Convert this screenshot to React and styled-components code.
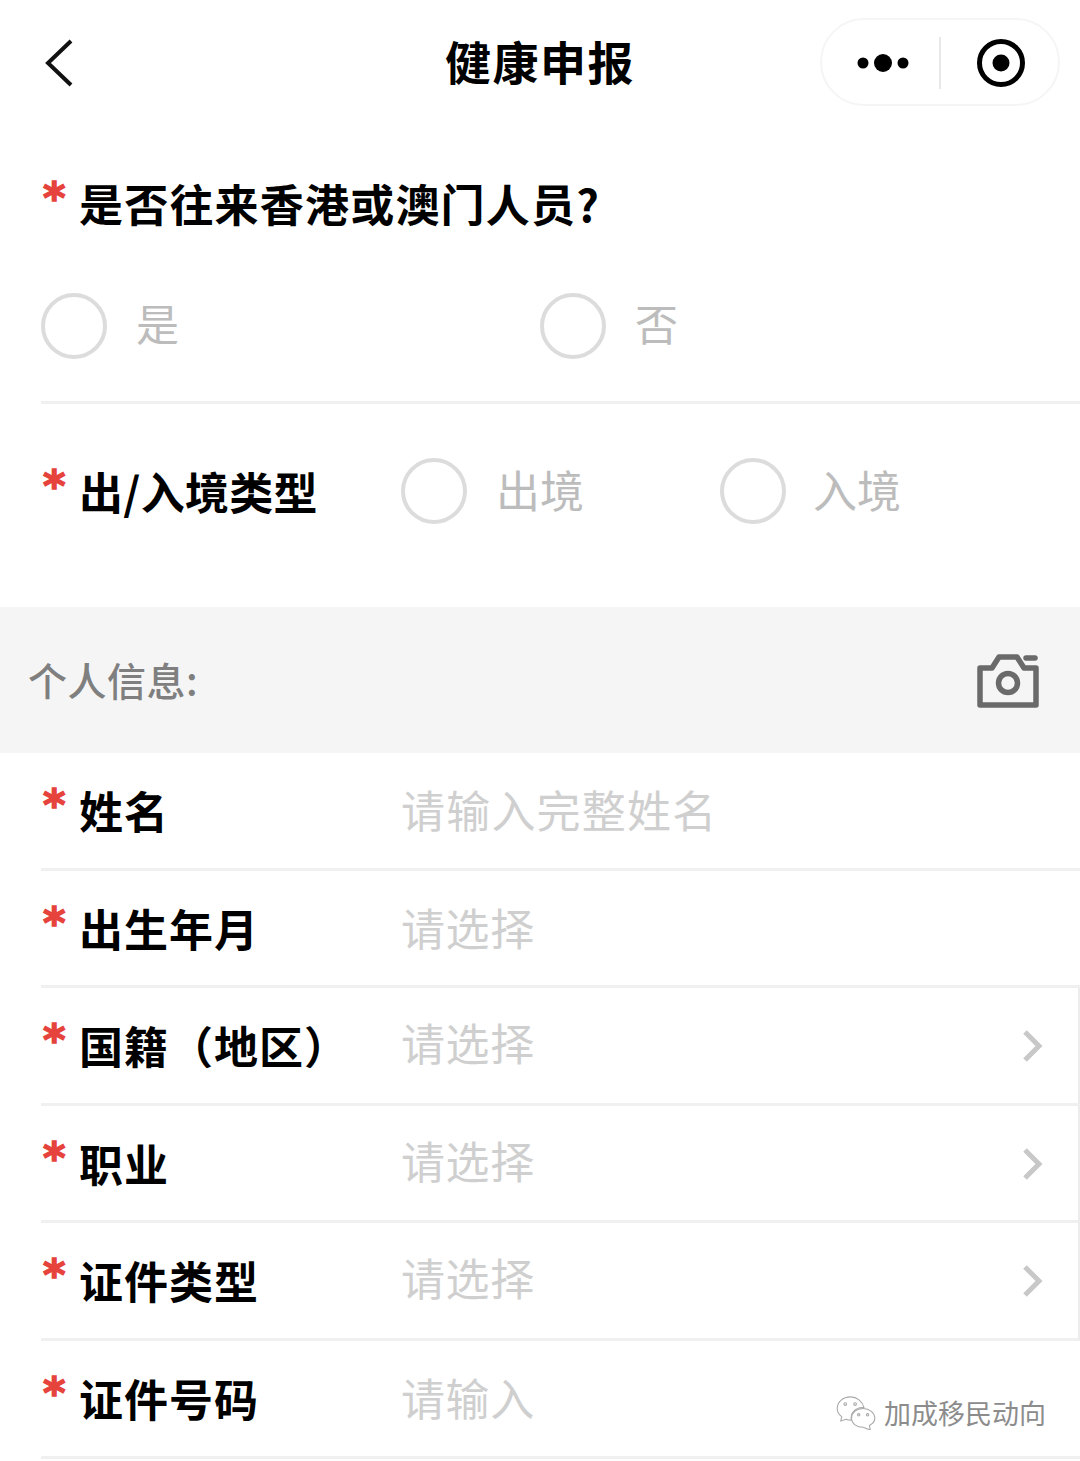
import React from "react";
import styled, { createGlobalStyle } from "styled-components";

const CJK = `"Noto Sans CJK SC", "Noto Sans", sans-serif`;

const Global = createGlobalStyle`
  html, body { margin: 0; padding: 0; background: #fff; }
  * { box-sizing: border-box; }
`;

const Page = styled.div`
  position: relative;
  width: 1080px;
  height: 1461px;
  overflow: hidden;
  background: #fff;
  font-family: ${CJK};
`;

const NavBar = styled.header`
  height: 128px;
  padding: 18px 20px 0 44px;
  display: grid;
  grid-template-columns: 240px 1fr 240px;
  align-items: start;
`;

const BackIcon = styled.svg`
  width: 32px;
  height: 50px;
  margin-top: 21px;
`;

const Title = styled.h1`
  margin: -2px 0 0;
  height: 88px;
  font-size: 46px;
  line-height: 88px;
  letter-spacing: 1.5px;
  font-weight: 700;
  color: #000;
  text-align: center;
  transform: translateX(-12px);
`;

const Capsule = styled.div`
  width: 240px;
  height: 88px;
  border: 2px solid #f5f5f5;
  border-radius: 44px;
  display: grid;
  grid-template-columns: 117px 2px 1fr;
  align-items: center;
  justify-items: center;
  padding-top: 2px;
`;

const MoreIcon = styled.svg`
  margin-left: 4px;
`;

const RecordIcon = styled.svg`
  margin-left: 2px;
`;

const CapsuleRule = styled.span`
  width: 2px;
  height: 52px;
  background: #e8e8e8;
`;

const Question = styled.section`
  margin-left: 41px;
  height: 276px;
  padding-top: 45px;
  border-bottom: 3px solid #f0f0f0;
`;

const LabelLine = styled.div`
  display: flex;
  align-items: flex-start;
  height: 119px;
`;

const Star = styled.span`
  width: 38px;
  flex: none;
  font-family: "DejaVu Sans", sans-serif;
  font-weight: 700;
  font-size: 43px;
  line-height: 44px;
  color: #e5433c;
  -webkit-text-stroke: 1.5px #e5433c;
  padding-left: 2px;
  margin-top: 3px;
`;

const Label = styled.span`
  font-size: 44px;
  line-height: 60px;
  font-weight: 700;
  color: #000;
  white-space: nowrap;
  letter-spacing: ${(p) => p.$spacing}px;
`;

const Options = styled.div`
  display: grid;
  grid-template-columns: ${(p) => p.$columns};
  align-items: center;
`;

const Option = styled.label`
  display: flex;
  align-items: center;
  gap: ${(p) => p.$gap}px;
`;

const Radio = styled.span`
  width: 66px;
  height: 66px;
  flex: none;
  border-radius: 50%;
  border: 4px solid #dcdcdc;
  background: #fff;
`;

const OptionText = styled.span`
  font-size: ${(p) => p.$size}px;
  line-height: 60px;
  color: #bcbcbc;
  margin-bottom: ${(p) => p.$lift}px;
`;

const TypeRow = styled.section`
  margin-left: 41px;
  height: 203px;
  padding-top: 54px;
  display: flex;
  align-items: flex-start;
`;

const TypeLabel = styled.div`
  width: 360px;
  flex: none;
  display: flex;
  align-items: flex-start;
  margin-top: 3px;
`;

const Band = styled.section`
  height: 146px;
  background: #f5f5f5;
  padding: 0 41px 0 28px;
  display: flex;
  align-items: center;
  justify-content: space-between;
`;

const BandTitle = styled.span`
  font-size: 39px;
  line-height: 60px;
  font-weight: 500;
  letter-spacing: 0.5px;
  color: #7f7f7f;
  margin-top: -3px;
`;

const CameraIcon = styled.svg`
  margin-top: 2px;
`;

const Rows = styled.div`
  margin-left: 41px;
`;

const Row = styled.div`
  height: 117.6px;
  border-bottom: 3px solid #f0f0f0;
  display: grid;
  grid-template-columns: 362px 1fr 60px;
  align-items: start;
  padding-top: 31px;
  border-right: ${(p) => (p.$arrow ? "2px solid #ececec" : "none")};
`;

const RowLabel = styled.div`
  display: flex;
  align-items: flex-start;
  margin-top: -4px;
`;

const Placeholder = styled.span`
  font-size: 44px;
  line-height: 56px;
  letter-spacing: ${(p) => p.$spacing}px;
  color: #cfcfcf;
  white-space: nowrap;
  margin-left: -2px;
  margin-top: ${(p) => p.$top}px;
`;

const Chevron = styled.svg`
  width: 22px;
  height: 34px;
  margin-top: 10px;
  margin-left: 4px;
`;

const Watermark = styled.div`
  position: absolute;
  right: 34px;
  bottom: 30px;
  display: flex;
  align-items: center;
  gap: 8px;
  font-size: 27px;
  line-height: 36px;
  color: #8c8c8c;
  text-shadow: 1px 1px 0 #fff;
`;

const rows = [
  { label: "姓名", ph: "请输入完整姓名", top: -3, phSpacing: 1.2 },
  { label: "出生年月", ph: "请选择", top: -3, phSpacing: 0.6 },
  { label: "国籍（地区）", ph: "请选择", arrow: true, top: -5, phSpacing: 0.6 },
  { label: "职业", ph: "请选择", arrow: true, top: -5, phSpacing: 0.6 },
  { label: "证件类型", ph: "请选择", arrow: true, top: -5, phSpacing: 0.6 },
  { label: "证件号码", ph: "请输入", top: -3, phSpacing: 0.6 },
];

const Required = () => <Star>*</Star>;

export default function App() {
  return (
    <Page>
      <Global />
      <NavBar>
        <BackIcon viewBox="0 0 32 50">
          <path d="M27 2 L4 24 L27 46" fill="none" stroke="#111" strokeWidth="4" />
        </BackIcon>
        <Title>健康申报</Title>
        <Capsule>
          <MoreIcon width="56" height="20" viewBox="0 0 56 20">
            <circle cx="8" cy="10" r="5.5" fill="#000" />
            <circle cx="28" cy="10" r="9" fill="#000" />
            <circle cx="48" cy="10" r="5.5" fill="#000" />
          </MoreIcon>
          <CapsuleRule />
          <RecordIcon width="50" height="50" viewBox="0 0 50 50">
            <circle cx="25" cy="25" r="21.5" fill="none" stroke="#000" strokeWidth="5" />
            <circle cx="25" cy="25" r="8.5" fill="#000" />
          </RecordIcon>
        </Capsule>
      </NavBar>

      <Question>
        <LabelLine>
          <Required />
          <Label $spacing={1.2}>是否往来香港或澳门人员?</Label>
        </LabelLine>
        <Options $columns="499px 1fr">
          <Option $gap={29}>
            <Radio />
            <OptionText $size={43} $lift={8}>是</OptionText>
          </Option>
          <Option $gap={29}>
            <Radio />
            <OptionText $size={43} $lift={8}>否</OptionText>
          </Option>
        </Options>
      </Question>

      <TypeRow>
        <TypeLabel>
          <Required />
          <Label $spacing={0.3}>出/入境类型</Label>
        </TypeLabel>
        <Options $columns="319px 1fr">
          <Option $gap={29}>
            <Radio />
            <OptionText $size={44} $lift={5}>出境</OptionText>
          </Option>
          <Option $gap={27}>
            <Radio />
            <OptionText $size={44} $lift={5}>入境</OptionText>
          </Option>
        </Options>
      </TypeRow>

      <Band>
        <BandTitle>个人信息:</BandTitle>
        <CameraIcon width="62" height="54" viewBox="0 0 62 54" fill="none" stroke="#6a6a6a" strokeWidth="5.5" strokeLinejoin="round">
          <path d="M3 14 H15 L22 3 H40 L47 14 H59 V51 H3 Z" />
          <circle cx="31" cy="29" r="9.5" />
          <path d="M49 4 H58" strokeLinecap="round" />
        </CameraIcon>
      </Band>

      <Rows>
        {rows.map((r) => (
          <Row key={r.label} $arrow={r.arrow}>
            <RowLabel>
              <Required />
              <Label $spacing={1}>{r.label}</Label>
            </RowLabel>
            <Placeholder $top={r.top} $spacing={r.phSpacing}>{r.ph}</Placeholder>
            {r.arrow ? (
              <Chevron viewBox="0 0 22 34">
                <path d="M3 3 L17 17 L3 31" fill="none" stroke="#c8c8c8" strokeWidth="5" />
              </Chevron>
            ) : (
              <span />
            )}
          </Row>
        ))}
      </Rows>

      <Watermark>
        <svg width="40" height="34" viewBox="0 0 44 38" fill="none" stroke="#a8a8a8" strokeWidth="1.2">
          <path d="M16 1 C7 1 1 7 1 14 C1 18 3 21 6 23 L5 28 L11 26 C13 27 15 27 17 27 C15 19 22 12 31 13 C29 6 23 1 16 1 Z" fill="#fff" />
          <path d="M30 14 C22 14 17 19 17 25 C17 31 23 35 30 35 L38 38 L37 33 C41 31 43 28 43 25 C43 19 37 14 30 14 Z" fill="#fff" />
          <circle cx="10" cy="9" r="1.5" />
          <circle cx="21" cy="9" r="1.5" />
          <circle cx="25" cy="21" r="1.3" />
          <circle cx="35" cy="21" r="1.3" />
        </svg>
        <span>加成移民动向</span>
      </Watermark>
    </Page>
  );
}
